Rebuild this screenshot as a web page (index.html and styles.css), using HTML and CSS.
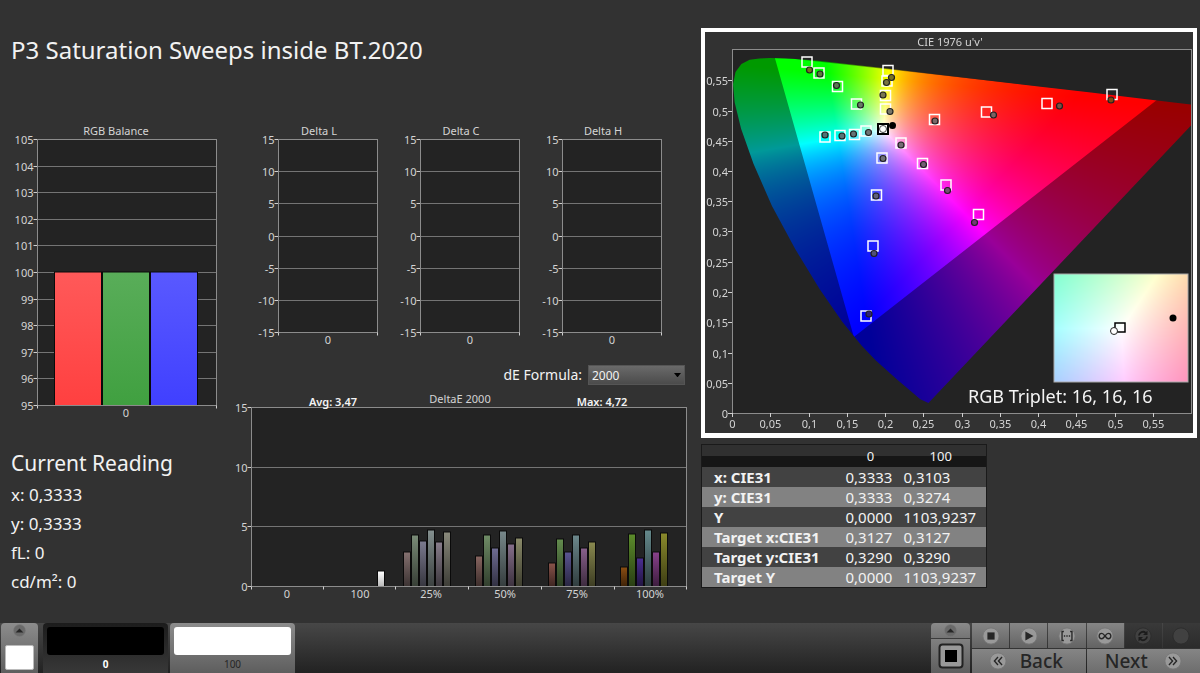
FILE: index.html
```html
<!DOCTYPE html>
<html lang="en">
<head>
<meta charset="utf-8">
<title>P3 Saturation Sweeps inside BT.2020</title>
<link rel="stylesheet" href="styles.css">
</head>
<body>
<main class="workspace">
  <section class="charts">
    <h1 class="page-title">P3 Saturation Sweeps inside BT.2020</h1>
    <div class="balance-column">
      <svg class="chart" id="rgb-balance" viewBox="0 0 230 302" role="img" aria-label="RGB Balance"></svg>
      <section class="reading">
        <h2 class="reading-title">Current Reading</h2>
        <p class="reading-line">x: 0,3333</p>
        <p class="reading-line">y: 0,3333</p>
        <p class="reading-line">fL: 0</p>
        <p class="reading-line">cd/m²: 0</p>
      </section>
    </div>
    <div class="delta-column">
      <div class="delta-row">
        <svg class="chart" id="delta-l" viewBox="0 0 142 228" role="img" aria-label="Delta L"></svg>
        <svg class="chart" id="delta-c" viewBox="0 0 142 228" role="img" aria-label="Delta C"></svg>
        <svg class="chart" id="delta-h" viewBox="0 0 142 228" role="img" aria-label="Delta H"></svg>
      </div>
      <div class="formula">
        <label class="formula-label" for="formula">dE Formula:</label>
        <span class="select-wrap">
          <select class="formula-select" id="formula"><option>2000</option></select>
          <svg class="select-arrow" viewBox="0 0 8 5" aria-hidden="true"><path d="M0 0h8L4 5z"/></svg>
        </span>
      </div>
      <svg class="chart" id="delta-e" viewBox="0 0 470 214" role="img" aria-label="DeltaE 2000"></svg>
    </div>
  </section>

  <section class="gamut-column">
    <div class="gamut-panel">
      <svg class="chart" id="cie" viewBox="-27 -17 488 401" role="img" aria-label="CIE 1976 u'v'">
        <foreignObject x="0" y="0" width="459" height="364"><canvas class="plane" id="locus" width="459" height="364"></canvas></foreignObject>
        <g id="cie-axes"></g>
        <g id="cie-markers"></g>
        <foreignObject x="322" y="225" width="134" height="108"><canvas class="plane" id="inset" width="134" height="108"></canvas></foreignObject>
        <rect class="inset-frame" x="322" y="225" width="134" height="108"/>
        <rect class="inset-target" x="383" y="274" width="10" height="9"/>
        <circle class="inset-reading" cx="382" cy="282" r="3.5"/>
        <circle class="current" cx="441" cy="269" r="3.5"/>
        <text class="triplet" x="236" y="354">RGB Triplet: 16, 16, 16</text>
      </svg>
    </div>
    <table class="data">
      <thead><tr><th></th><th scope="col">0</th><th scope="col">100</th></tr></thead>
      <tbody>
        <tr><th scope="row">x: CIE31</th><td>0,3333</td><td>0,3103</td></tr>
        <tr><th scope="row">y: CIE31</th><td>0,3333</td><td>0,3274</td></tr>
        <tr><th scope="row">Y</th><td>0,0000</td><td>1103,9237</td></tr>
        <tr><th scope="row">Target x:CIE31</th><td>0,3127</td><td>0,3127</td></tr>
        <tr><th scope="row">Target y:CIE31</th><td>0,3290</td><td>0,3290</td></tr>
        <tr><th scope="row">Target Y</th><td>0,0000</td><td>1103,9237</td></tr>
      </tbody>
    </table>
  </section>
</main>

<footer class="toolbar">
  <button class="picker" type="button" aria-label="Choose patch">
    <svg class="knob small" viewBox="0 0 20 20" aria-hidden="true"><circle class="knob-dark" cx="10" cy="10" r="9"/><path d="M4 13l6-6 6 6z"/></svg>
    <span class="picker-chip"></span>
  </button>
  <button class="patch selected" type="button"><span class="patch-color black"></span><span class="patch-name">0</span></button>
  <button class="patch" type="button"><span class="patch-color white"></span><span class="patch-name">100</span></button>
  <div class="transport">
    <div class="meter">
      <button class="meter-up" type="button" aria-label="Expand">
        <svg class="knob small" viewBox="0 0 20 20" aria-hidden="true"><circle class="knob-dark" cx="10" cy="10" r="9"/><path d="M4 13l6-6 6 6z"/></svg>
      </button>
      <button class="meter-view" type="button" aria-label="Pattern window">
        <svg class="meter-icon" viewBox="0 0 26 26" aria-hidden="true"><rect class="frame" x="1.5" y="1.5" width="23" height="23" rx="3"/><rect x="7" y="7" width="12" height="12"/></svg>
      </button>
    </div>
    <div class="keys">
      <button class="key" type="button" aria-label="Stop"><svg class="knob" viewBox="0 0 20 20" aria-hidden="true"><circle class="knob-light" cx="10" cy="10" r="9"/><path d="M6 6h8v8H6z"/></svg></button>
      <button class="key" type="button" aria-label="Play"><svg class="knob" viewBox="0 0 20 20" aria-hidden="true"><circle class="knob-light" cx="10" cy="10" r="9"/><path d="M6 5l9 5-9 5z"/></svg></button>
      <button class="key" type="button" aria-label="Read series"><svg class="knob" viewBox="0 0 20 20" aria-hidden="true"><circle class="knob-light" cx="10" cy="10" r="9"/><path class="line" d="M6.500 5H4.500v10h2M13.500 5h2v10h-2"/><path d="M6.500 9.300h1.500v1.500h-1.500zM9.250 9.300h1.500v1.500h-1.500zM12 9.300h1.500v1.500H12z"/></svg></button>
      <button class="key" type="button" aria-label="Read continuous"><svg class="knob" viewBox="0 0 20 20" aria-hidden="true"><circle class="knob-light" cx="10" cy="10" r="9"/><path class="line" d="M10 10C8.500 8 7.500 7 6.500 7a3 3 0 0 0 0 6C7.500 13 8.500 12 10 10S12.500 7 13.500 7a3 3 0 0 1 0 6C12.500 13 11.500 12 10 10z"/></svg></button>
      <button class="key off" type="button" aria-label="Refresh"><svg class="knob" viewBox="0 0 20 20" aria-hidden="true"><circle class="knob-off" cx="10" cy="10" r="9"/><path class="line thick" d="M5.500 9.500a4.500 4.500 0 0 1 7.500-3M14.500 10.500a4.500 4.500 0 0 1-7.500 3"/><path d="M15 4v5h-5zM5 16v-5h5z"/></svg></button>
      <button class="key off" type="button" aria-label="Record"><svg class="knob" viewBox="0 0 20 20" aria-hidden="true"><circle class="knob-off" cx="10" cy="10" r="9"/></svg></button>
      <button class="key wide" type="button"><svg class="knob" viewBox="0 0 20 20" aria-hidden="true"><circle class="knob-light" cx="10" cy="10" r="9"/><path class="line" d="M10 5.500L6 10l4 4.500M14.500 5.500l-4 4.500 4 4.500"/></svg>Back</button>
      <button class="key wide next" type="button">Next<svg class="knob" viewBox="0 0 20 20" aria-hidden="true"><circle class="knob-light" cx="10" cy="10" r="9"/><path class="line" d="M5.500 5.500l4 4.500-4 4.500M10 5.500l4 4.500-4 4.500"/></svg></button>
    </div>
  </div>
</footer>
<script src="charts.js"></script>
</body>
</html>
```
FILE: styles.css
```css
* { box-sizing: border-box; }

body {
  margin: 0;
  min-height: 100vh;
  display: flex;
  flex-direction: column;
  background: #323232;
  color: #f2f2f2;
  font-family: "Noto Sans", "Open Sans", sans-serif;
}

button, select { font: inherit; color: inherit; }
button { border: 0; padding: 0; margin: 0; }

.workspace {
  flex: 1;
  display: grid;
  grid-template-columns: 700fr 500fr;
  align-items: start;
}

.charts {
  display: grid;
  grid-template-columns: 230fr 470fr;
}

.page-title {
  grid-column: 1 / -1;
  margin: 0;
  padding: 34px 0 54px 11px;
  font-size: 24px;
  line-height: 32px;
  font-weight: 400;
}

.chart { display: block; width: 100%; height: auto; }

.delta-row {
  display: grid;
  grid-template-columns: repeat(3, 1fr);
  padding: 0 23px 0 21px;
}

.formula {
  display: flex;
  justify-content: flex-end;
  align-items: center;
  gap: 6px;
  padding: 17px 15px 4px 0;
}
.formula-label { font-size: 14px; line-height: 20px; }
.select-wrap { display: grid; align-items: center; width: 97px; }
.formula-select {
  grid-area: 1 / 1;
  appearance: none;
  height: 20px;
  padding: 0 3px;
  border: 1px solid #555;
  border-radius: 0;
  background: linear-gradient(#6a6a6a, #4b4b4b);
  font-size: 12px;
}
.select-arrow {
  grid-area: 1 / 1;
  justify-self: end;
  width: 7px;
  margin-right: 4px;
  pointer-events: none;
}

.reading { padding: 26px 0 0 11px; }
.reading-title { margin: 0 0 2px; font-size: 21px; line-height: 30px; font-weight: 400; }
.reading-line { margin: 0; font-size: 17px; line-height: 29px; }

.axis-text { font-size: 11px; fill: #d4d4d4; }
.chart-title { font-size: 11px; fill: #d4d4d4; text-anchor: middle; }
.note { font-size: 11px; font-weight: 600; fill: #f4f4f4; text-anchor: middle; }
.end { text-anchor: end; }
.middle { text-anchor: middle; }
.plot { fill: #232323; }
.grid { stroke: #747474; stroke-width: 1; fill: none; }
.plot-frame { stroke: #8c8c8c; stroke-width: 1; fill: none; }
.tick { stroke: #d0d0d0; stroke-width: 1; }

.gamut-column { padding: 28px 3px 0 1px; }
.gamut-panel { border: 4px solid #fff; border-bottom-width: 5px; }
.plane { display: block; width: 100%; height: 100%; }
.target { fill: none; stroke: #fff; stroke-width: 1.5; }
.reading-dot { stroke: #222; stroke-width: 1.2; }
.current { fill: #000; }
.white-target { fill: none; stroke: #000; stroke-width: 2; }
.white-halo { fill: none; stroke: #fff; stroke-width: 1; }
.white-dot { fill: #fff; stroke: #444; stroke-width: 1; }
.inset-frame { fill: none; stroke: #aaa; stroke-width: 1; }
.inset-target { fill: none; stroke: #000; stroke-width: 1.5; }
.inset-reading { fill: #fff; stroke: #222; stroke-width: 1; }
.triplet { font-size: 18px; fill: #f4f4f4; }

.data {
  width: 286px;
  margin-top: 6px;
  border: 1px solid #1a1a1a;
  border-collapse: collapse;
  font-size: 15px;
  line-height: 20px;
}
.data th, .data td { padding: 0; height: 20px; text-align: left; }
.data thead { background: linear-gradient(#303030 50%, #161616 52%); }
.data thead th { height: 22px; font-weight: 400; font-size: 13px; text-align: center; padding-right: 8px; }
.data tbody th { padding-left: 12px; width: 144px; font-weight: 700; }
.data tbody td:nth-child(2) { width: 58px; }
.data tbody tr { background: #424242; }
.data tbody tr:nth-child(even) { background: #828282; }

.toolbar {
  display: flex;
  height: 50px;
  background: linear-gradient(#474747, #222);
}
.picker {
  display: flex;
  flex-direction: column;
  align-items: center;
  gap: 8px;
  width: 37px;
  margin: 0 5px 0 1px;
  padding-top: 1px;
  border-radius: 4px 4px 0 0;
  background: linear-gradient(#8c8c8c, #5e5e5e);
}
.picker-chip { width: 29px; height: 25px; border-radius: 2px; background: #fff; border: 1px solid #bbb; }
.patch {
  display: flex;
  flex-direction: column;
  width: 125px;
  margin-right: 2px;
  padding: 4px 4px 0;
  border-radius: 4px 4px 0 0;
  background: linear-gradient(#8c8c8c, #5e5e5e);
  color: #262626;
}
.patch.selected { background: linear-gradient(#1c1c1c, #383838); color: #fff; font-weight: 700; }
.patch-color { height: 30px; border-radius: 3px; }
.patch-color.black { background: #000; }
.patch-color.white { background: #fff; }
.patch-name { font-size: 10px; line-height: 18px; text-align: center; }

.transport { display: flex; gap: 2px; margin-left: auto; }
.meter { display: flex; flex-direction: column; gap: 1px; width: 39px; }
.meter-up, .meter-view {
  display: flex;
  align-items: center;
  justify-content: center;
  background: linear-gradient(#8a8a8a, #747474);
}
.meter-up { height: 15px; border-radius: 4px 4px 0 0; }
.meter-view { flex: 1; background: linear-gradient(#808080, #5e5e5e); }
.meter-icon { width: 26px; }
.meter-icon .frame { fill: #999; stroke: #222; stroke-width: 2; }

.keys {
  display: grid;
  grid-template-columns: repeat(12, 1fr);
  grid-template-rows: 25px 24px;
  gap: 1px;
  width: 228px;
}
.key {
  grid-column: span 2;
  display: flex;
  align-items: center;
  justify-content: center;
  background: linear-gradient(#868686, #636363);
  color: #262626;
}
.key.off { background: linear-gradient(#393939, #2b2b2b); }
.key.wide { grid-column: span 6; gap: 13px; padding-right: 6px; font-size: 19px; line-height: 24px; font-weight: 500; background: linear-gradient(#858585, #6d6d6d); }
.key.next { gap: 16px; padding-right: 0; }
.knob { width: 18px; height: 18px; fill: #262626; }
.knob.small { width: 13px; height: 13px; }
.knob-dark { fill: #6a6a6a; stroke: #777; }
.knob-light { fill: #999; stroke: #777; }
.knob-off { fill: #414141; stroke: #2c2c2c; }
.line { fill: none; stroke: #262626; stroke-width: 1.5; }
.off .knob { fill: #1c1c1c; }
.off .line { stroke: #1c1c1c; stroke-width: 2; }
```
FILE: charts.js
```js
const NS = "http://www.w3.org/2000/svg";

function add(parent, name, attrs, text) {
  const el = document.createElementNS(NS, name);
  for (const key in attrs) el.setAttribute(key, attrs[key]);
  if (text !== undefined) el.textContent = text;
  parent.appendChild(el);
  return el;
}

function line(parent, cls, x1, y1, x2, y2) {
  add(parent, "line", { class: cls, x1, y1, x2, y2 });
}

function gradient(svg, id, top, bottom) {
  const g = add(svg, "linearGradient", { id, x1: 0, y1: 0, x2: 0, y2: 1 });
  add(g, "stop", { offset: 0, "stop-color": top });
  add(g, "stop", { offset: 1, "stop-color": bottom });
  return "url(#" + id + ")";
}

function barChart(id, o) {
  const svg = document.getElementById(id);
  const y = v => Math.round(o.bottom - (v - o.min) / (o.max - o.min) * (o.bottom - o.top)) + 0.5;
  const l = o.left + 0.5, r = o.right + 0.5;
  add(svg, "rect", { class: "plot", x: l, y: y(o.max), width: r - l, height: y(o.min) - y(o.max) });
  for (let v = o.min; v <= o.max; v += o.step) {
    line(svg, "grid", l, y(v), r, y(v));
    line(svg, "tick", l - 4, y(v), l, y(v));
    add(svg, "text", { class: "axis-text end", x: l - 4, y: y(v) + 4 }, v);
  }
  (o.bars || []).forEach((b, i) => {
    const top = y(b.value);
    add(svg, "rect", { x: b.x - 1, y: top - 1, width: b.width + 2, height: y(o.min) - top + 1, fill: "#0a0a0a" });
    add(svg, "rect", { x: b.x, y: top, width: b.width, height: y(o.min) - top, fill: gradient(svg, id + "-" + i, b.from, b.to) });
  });
  add(svg, "rect", { class: "plot-frame", x: l, y: y(o.max), width: r - l, height: y(o.min) - y(o.max) });
  o.ticks.forEach(x => line(svg, "tick", x + 0.5, y(o.min), x + 0.5, y(o.min) + 3));
  o.labels.forEach(([x, t]) => add(svg, "text", { class: "axis-text middle", x, y: o.bottom + 12 }, t));
  add(svg, "text", { class: "chart-title", x: o.titleX, y: o.titleY }, o.title);
  (o.notes || []).forEach(([x, t]) => add(svg, "text", { class: "note", x, y: o.top - 1 }, t));
}

barChart("rgb-balance", {
  title: "RGB Balance", titleX: 116, titleY: 15, left: 37, right: 216, top: 19, bottom: 285,
  min: 95, max: 105, step: 1, ticks: [37, 216], labels: [[126, "0"]],
  bars: [
    { x: 55, width: 46, value: 100, from: "#ff5959", to: "#ff4040" },
    { x: 103, width: 46, value: 100, from: "#59ad59", to: "#40a040" },
    { x: 151, width: 46, value: 100, from: "#5959ff", to: "#4040ff" }
  ]
});

["L", "C", "H"].forEach(name => barChart("delta-" + name.toLowerCase(), {
  title: "Delta " + name, titleX: 68, titleY: 15, left: 27, right: 126, top: 19, bottom: 212,
  min: -15, max: 15, step: 5, ticks: [27, 126], labels: [[77, "0"]]
}));

const sweeps = [
  { x: 174, values: [2.85, 4.25, 3.8, 4.7, 3.7, 4.55], colors: ["#857170", "#7a8b77", "#7b7a8e", "#84908f", "#887d8b", "#89897b"] },
  { x: 246, values: [2.5, 4.25, 3.15, 4.65, 3.5, 4.05], colors: ["#876560", "#6f8c66", "#6f6c93", "#77888a", "#866f8b", "#8a8a69"] },
  { x: 319, values: [1.95, 3.9, 2.85, 4.25, 3.15, 3.7], colors: ["#89534a", "#638c4e", "#5b5592", "#6c888c", "#88608b", "#89894f"] },
  { x: 391, values: [1.6, 4.35, 2.35, 4.7, 2.85, 4.45], colors: ["#8a4d12", "#5c8c2b", "#4b2e92", "#64888b", "#88418b", "#8a8a2c"] }
];
const bars = [{ x: 148, width: 6, value: 1.25, from: "#ffffff", to: "#b8b8b8" }];
sweeps.forEach(s => s.values.forEach((value, i) =>
  bars.push({ x: s.x + i * 8, width: 6, value, from: s.colors[i], to: `color-mix(in srgb, ${s.colors[i]} 45%, black)` })));

barChart("delta-e", {
  title: "DeltaE 2000", titleX: 230, titleY: 14, left: 21, right: 456, top: 18, bottom: 197,
  min: 0, max: 15, step: 5, ticks: [21, 93, 165, 238, 311, 384, 456],
  labels: [[57, "0"], [130, "100"], [201, "25%"], [275, "50%"], [347, "75%"], [420, "100%"]],
  notes: [[103, "Avg: 3,47"], [372, "Max: 4,72"]],
  bars
});

/* Chromaticity planes, filled with linear RGB scaled to its largest channel */
const XYZ_TO_RGB = [[3.2406, -1.5372, -0.4986], [-0.9689, 1.8758, 0.0415], [0.0557, -0.2040, 1.0570]];

function colorOf(x, y) {
  const X = x / y, Z = (1 - x - y) / y;
  const rgb = XYZ_TO_RGB.map(m => Math.max(0, m[0] * X + m[1] + m[2] * Z));
  const top = Math.max(...rgb);
  return rgb.map(c => 255 * c / top);
}

function paint(canvas, toXY) {
  const ctx = canvas.getContext("2d");
  const img = ctx.createImageData(canvas.width, canvas.height);
  for (let j = 0, k = 0; j < canvas.height; j++) {
    for (let i = 0; i < canvas.width; i++, k += 4) {
      const [r, g, b] = colorOf(...toXY(i, j));
      img.data[k] = r; img.data[k + 1] = g; img.data[k + 2] = b; img.data[k + 3] = 255;
    }
  }
  ctx.putImageData(img, 0, 0);
  return ctx;
}

const U = 765, V = 605, H = 364;
const locus = [
  [.2568, .0166], [.2461, .0226], [.2347, .0350], [.2161, .0550], [.1877, .0871], [.1690, .1119],
  [.1441, .1510], [.1147, .2044], [.0828, .2708], [.0521, .3427], [.0282, .4117], [.0119, .4698],
  [.0035, .5131], [.0014, .5432], [.0046, .5638], [.0123, .5770], [.0231, .5837], [.0360, .5861],
  [.0501, .5868], [.0792, .5856], [.1127, .5821], [.1531, .5766], [.2026, .5694], [.2623, .5604],
  [.3315, .5501], [.4035, .5393], [.4692, .5296], [.5203, .5219], [.5830, .5125], [.6234, .5065]
];
const bt2020 = [[.5566, .5185], [.0556, .5890], [.1593, .1258]];

function trace(path, points) {
  points.forEach(([u, v], i) => path[i ? "lineTo" : "moveTo"](u * U, H - v * V));
  path.closePath();
}

const plane = document.getElementById("locus");
const ctx = paint(plane, (i, j) => {
  const u = (i + 0.5) / U, v = Math.max(0.004, (H - j) / V), d = 6 * u - 16 * v + 12;
  return [9 * u / d, 4 * v / d];
});
const shade = new Path2D();
shade.rect(0, 0, plane.width, plane.height);
trace(shade, bt2020);
ctx.fillStyle = "rgba(0, 0, 0, 0.4)";
ctx.fill(shade, "evenodd");
const mask = new Path2D();
trace(mask, locus);
ctx.fillStyle = "#000";
ctx.globalCompositeOperation = "destination-in";
ctx.fill(mask);
ctx.globalCompositeOperation = "destination-over";
ctx.fillStyle = "#232323";
ctx.fillRect(0, 0, plane.width, plane.height);

paint(document.getElementById("inset"), (i, j) => [0.3127 + (i - 67) / 2573, 0.329 - (j - 54) / 2325]);

const axes = document.getElementById("cie-axes");
add(axes, "rect", { class: "plot-frame", x: 0.5, y: 0.5, width: 459, height: 364 });
for (let n = 0; n <= 11; n++) {
  const label = String(n * 5 / 100).replace(".", ",");
  const x = Math.round(n * 0.05 * U) + 0.5, y = Math.round(H - n * 0.05 * V) + 0.5;
  line(axes, "tick", x, H, x, H + 4);
  line(axes, "tick", -4, y, 0, y);
  add(axes, "text", { class: "axis-text middle", x, y: H + 15 }, label);
  add(axes, "text", { class: "axis-text end", x: -4, y: y + 4 }, label);
}
add(axes, "text", { class: "chart-title", x: 218, y: -3 }, "CIE 1976 u'v'");

/* Target square x, y, then reading x, y, then the reading's fill */
const markers = [
  [75, 13, 77.5, 21, "#74711f"], [87, 24, 88, 25, "#5b7a3c"], [105.5, 37.5, 104.5, 36.5, "#5a7a50"], [124.5, 55, 128.5, 56, "#667a66"],
  [156, 21.5, 159.5, 28.5, "#7a7420"], [155, 32, 154.5, 33.5, "#7a7440"], [153.5, 46.5, 151, 46, "#777750"], [153.5, 60, 158, 62.5, "#777768"],
  [202.5, 70.5, 203, 72, "#7a6a6a"], [254.5, 63, 261.5, 66, "#7a6262"], [315, 54.5, 327.5, 57, "#7a5046"], [380, 45.5, 379, 51, "#804a10"],
  [169, 94, 169, 96, "#756d75"], [190.5, 114.5, 191.5, 115.5, "#756075"], [214, 136, 215.5, 141.5, "#755075"], [246.5, 165.5, 242.5, 173.5, "#753a75"],
  [134, 82, 136.5, 83.5, "#6d7575"], [122.5, 85.5, 121.5, 85, "#647575"], [108, 86.5, 110, 87, "#5c7575"], [93, 88, 93, 86, "#4f7575"],
  [150, 109, 151, 109.5, "#707078"], [144.5, 146, 144, 147, "#60607a"], [141, 197, 142, 204.5, "#50507a"], [134, 267, 137, 265, "#30207a"]
];
const layer = document.getElementById("cie-markers");
markers.forEach(([x, y]) => add(layer, "rect", { class: "target", x: x - 5, y: y - 5, width: 10, height: 10 }));
markers.forEach(([, , cx, cy, fill]) => add(layer, "circle", { class: "reading-dot", cx, cy, r: 3, fill }));
add(layer, "rect", { class: "white-halo", x: 147.5, y: 76.5, width: 7, height: 7 });
add(layer, "rect", { class: "white-target", x: 146, y: 75, width: 10, height: 10 });
add(layer, "circle", { class: "white-dot", cx: 151, cy: 80, r: 3.5 });
add(layer, "circle", { class: "current", cx: 160.5, cy: 76.5, r: 3.5 });
```
